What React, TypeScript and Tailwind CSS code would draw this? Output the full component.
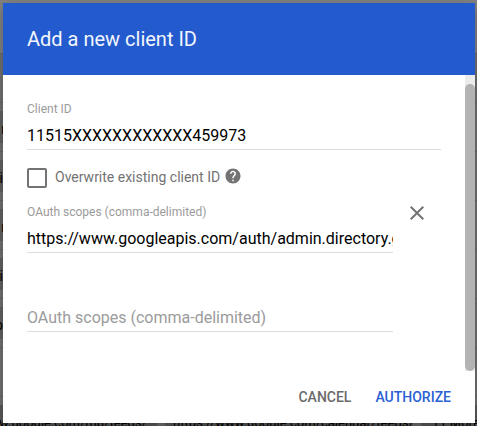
import React from "react";
import { MdHelp, MdClose } from "react-icons/md";

const rows = ["r", "i", "r", "i", "o"];

function Backdrop() {
  return (
    <div className="flex h-full flex-col bg-[#7a7a7a] text-[14px] leading-[36px] text-black">
      <div className="h-[54px] shrink-0 border-b border-[#686868] bg-[#808080]" />
      <div className="h-[49px] shrink-0 border-b border-[#626262] bg-[#707070]" />
      {rows.map((letter, i) => (
        <div key={i} className="flex h-[49px] shrink-0 justify-between border-b border-[#626262] bg-[#707070] pt-2">
          <div className="flex h-8 w-[3px] justify-end overflow-hidden bg-[#606060]">
            <span className={letter === "r" ? "-mr-[3px]" : "mr-0"}>{letter}</span>
          </div>
        </div>
      ))}
      <div className="h-[49px] shrink-0 border-b border-[#626262] bg-[#707070]" />
      <div className="flex h-[29px] shrink-0 overflow-hidden bg-[#707070] pt-2">
        <div className="flex h-8 w-full whitespace-nowrap bg-[#595959] text-[13px] leading-[35px]">
          <span className="flex w-[147px] shrink-0 justify-end">www.google.com/m8/feeds/</span>
          <span className="ml-[10px] h-8 w-2 shrink-0 bg-[#6c6c6c]" />
          <span className="w-[248px] shrink-0 pl-2">https://www.google.com/calendar/feeds/</span>
          <span className="h-8 w-2 shrink-0 bg-[#6c6c6c]" />
          <span className="pl-[11px]">11 More</span>
        </div>
      </div>
    </div>
  );
}

export default function App() {
  return (
    <div className="relative h-[426px] w-[477px] overflow-hidden font-['Roboto',sans-serif]">
      <Backdrop />
      <div className="absolute left-[3px] top-[3px] flex h-[420px] w-[472px] flex-col bg-white shadow-[0_5px_12px_rgba(0,0,0,0.25)]">
        <header className="flex h-[72px] shrink-0 items-center bg-[#235bce] pl-6">
          <h1 className="text-[20px] leading-6 text-[#f3f6fc]">Add a new client ID</h1>
        </header>
        <div className="flex h-[296px] shrink-0">
          <div className="w-[462px] pl-6 pt-[26px]">
            <div className="h-[49px] w-[414px] border-b border-[#dcdcdc]">
              <div className="text-[12px] leading-4 text-[#9b9b9b]">Client ID</div>
              <div className="pt-[7px] text-[16px] leading-6 text-black">11515XXXXXXXXXXXX459973</div>
            </div>
            <div className="flex h-[54px] items-center text-[#737373]">
              <span className="mt-px h-5 w-5 rounded-[2px] border-2 border-[#737373]" />
              <span className="ml-2 text-[14px] leading-5">Overwrite existing client ID</span>
              <MdHelp className="mb-[3px] ml-1 h-[18px] w-[18px]" />
            </div>
            <div className="flex">
              <div className="h-[49px] w-[366px] border-b border-[#dcdcdc]">
                <div className="text-[12px] leading-4 text-[#9b9b9b]">OAuth scopes (comma-delimited)</div>
                <div className="overflow-hidden whitespace-nowrap pt-[7px] text-[16px] leading-6 text-black">https://www.googleapis.com/auth/admin.directory.group</div>
              </div>
              <MdClose className="-mt-[3px] ml-3 h-6 w-6 text-[#737373]" />
            </div>
            <div className="mt-[52px] h-[27px] w-[366px] border-b border-[#dcdcdc] pt-px text-[16px] leading-6 text-[#9b9b9b]">OAuth scopes (comma-delimited)</div>
          </div>
          <div className="w-[10px] bg-[#ebebeb] pt-[9px]">
            <div className="h-[287px] rounded-full bg-[#b3b3b3]" />
          </div>
        </div>
        <footer className="flex h-[52px] items-center justify-end gap-6 bg-white pr-6 text-[14px] font-medium leading-5">
          <button className="text-[#6b6b6b]">CANCEL</button>
          <button className="text-[#2a5fd4]">AUTHORIZE</button>
        </footer>
      </div>
    </div>
  );
}
